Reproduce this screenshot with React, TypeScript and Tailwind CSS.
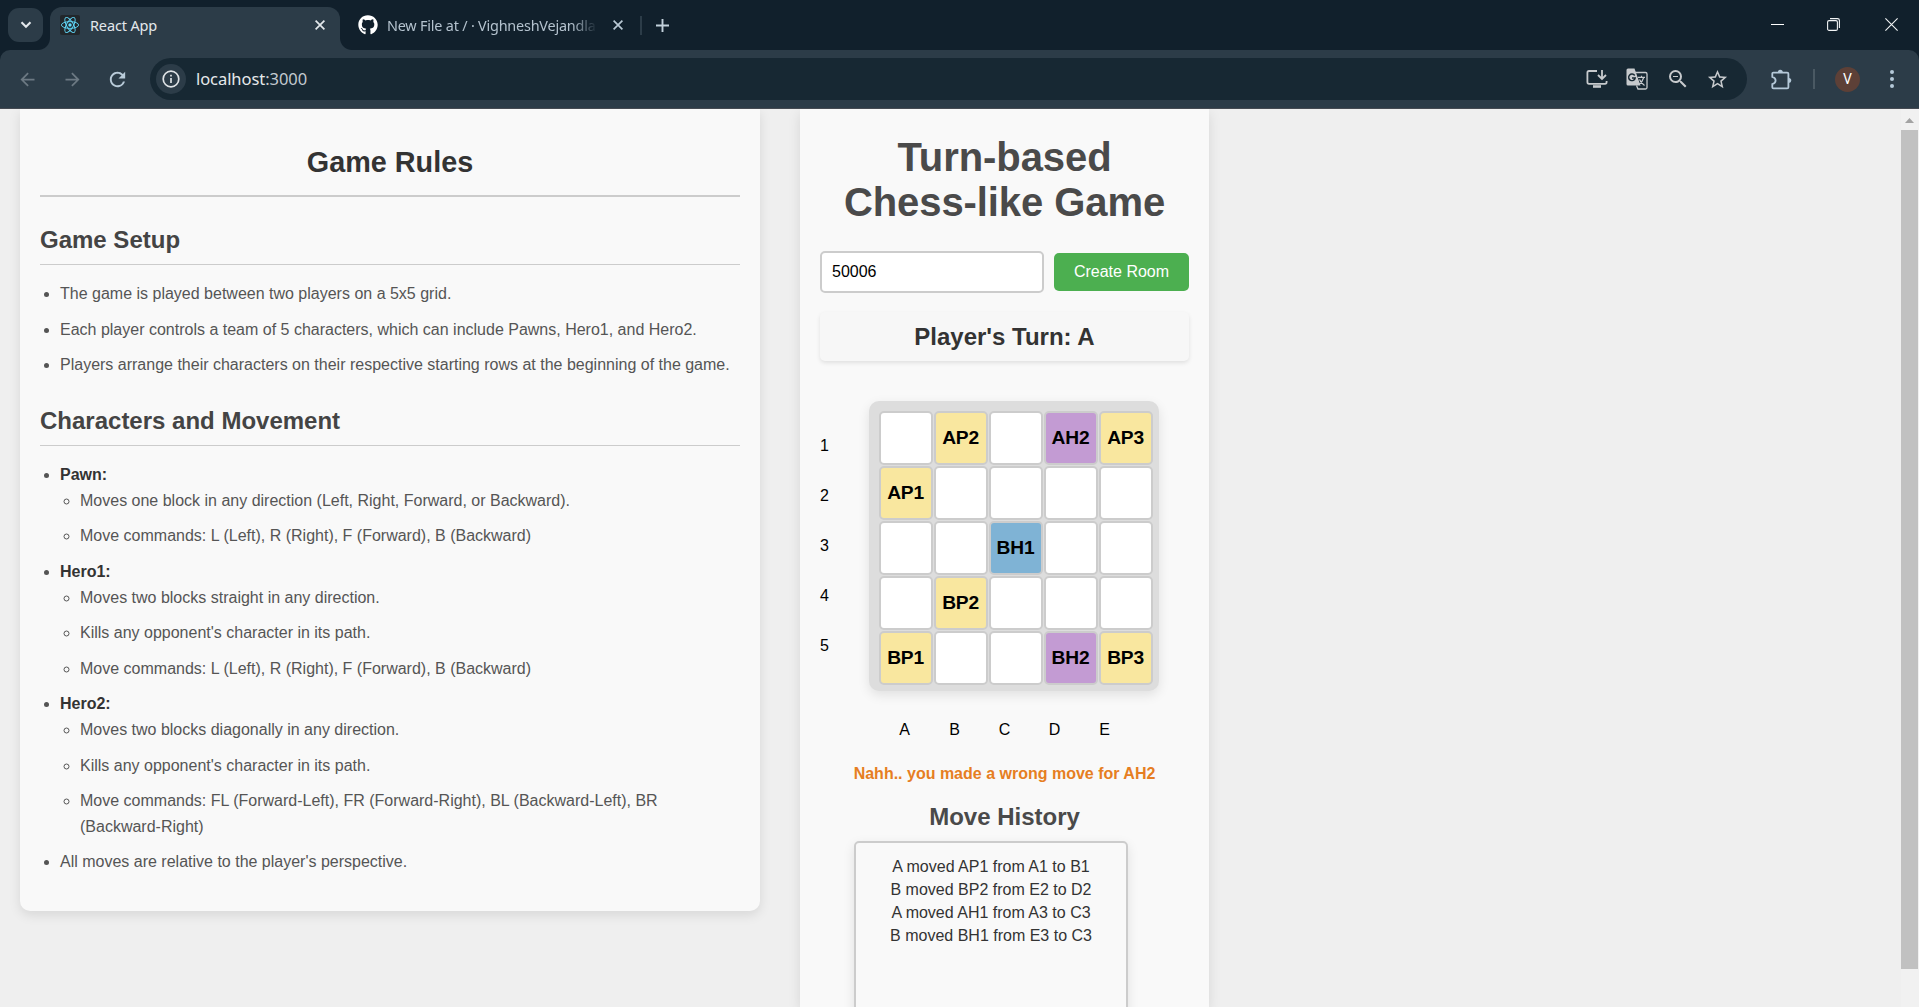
import React from "react";
import { MdArrowBack, MdArrowForward, MdRefresh, MdStarBorder, MdOutlineZoomOut } from "react-icons/md";
import { FaGithub } from "react-icons/fa";

type IconProps = { className?: string };

function ReactLogo({ className }: IconProps) {
  return (
    <svg viewBox="0 0 20 20" className={className} fill="none" stroke="#61dafb" strokeWidth="0.9">
      <rect width="20" height="20" rx="2" fill="#22272b" stroke="none" />
      <ellipse cx="10" cy="10" rx="8.6" ry="3.4" />
      <ellipse cx="10" cy="10" rx="8.6" ry="3.4" transform="rotate(60 10 10)" />
      <ellipse cx="10" cy="10" rx="8.6" ry="3.4" transform="rotate(120 10 10)" />
      <circle cx="10" cy="10" r="1.7" fill="#61dafb" stroke="none" />
    </svg>
  );
}

function CloseIcon({ className }: IconProps) {
  return (
    <svg viewBox="0 0 10 10" className={className} stroke="currentColor" strokeWidth="1.7" fill="none">
      <path d="M0.6 0.6 9.4 9.4M9.4 0.6 0.6 9.4" />
    </svg>
  );
}

function InstallIcon({ className }: IconProps) {
  return (
    <svg viewBox="0 0 22 20" className={className} stroke="currentColor" strokeWidth="1.8" fill="none">
      <path d="M11 2H3Q1.400 2 1.400 3.600V13Q1.400 14.800 3 14.800H19Q20.600 14.800 20.600 13V12" />
      <path d="M16 1V9.500M12 6 16 10 20 6" />
      <path d="M7 17.500H15" strokeWidth="2.600" />
    </svg>
  );
}

function TranslateIcon({ className }: IconProps) {
  return (
    <svg viewBox="0 0 22 22" className={className} fill="none">
      <path d="M2 0.500H8.500L14.500 17.500H2Q0.500 17.500 0.500 16V2Q0.500 0.500 2 0.500Z" fill="#c7cacd" />
      <path d="M9 4.500H19.500Q21 4.500 21 6V19.500Q21 21 19.500 21H12L10.500 17.500" stroke="#c7cacd" strokeWidth="1.3" />
      <path d="M8.700 7.500A3.300 3.300 0 1 0 9.200 10H6" stroke="#172833" strokeWidth="1.4" />
      <path
        d="M12 9.300H19M15.500 7.800V9.300M17.700 9.500Q16.500 14 12.800 16.600M13.500 11.500Q15 15 18.500 17.500"
        stroke="#c7cacd"
        strokeWidth="1.2"
      />
    </svg>
  );
}

function ExtensionIcon({ className }: IconProps) {
  return (
    <svg viewBox="0 0 21 21" className={className}>
      <path
        d="M2.300 3.600H16.200Q17.400 3.600 17.400 4.800V18.200Q17.400 19.400 16.200 19.400H2.500Q1.300 19.400 1.300 18.200V15.200Q4.600 14.200 4.600 11.500Q4.600 8.800 1.300 7.800V4.600Q1.300 3.600 2.300 3.600Z"
        fill="none"
        stroke="currentColor"
        strokeWidth="1.800"
      />
      <path d="M6.800 3.200A2.500 2.500 0 0 1 11.800 3.200ZM17.800 9A2.500 2.500 0 0 1 17.800 14Z" fill="currentColor" />
    </svg>
  );
}

function BrowserTabs() {
  return (
    <div className="flex h-[50px] bg-[#11202c]">
      <div className="mt-2 ml-2 flex h-[34px] w-[35px] items-center justify-center rounded-[11px] bg-[#2c3c48]">
        <svg viewBox="0 0 12 8" className="h-[8px] w-[12px]" fill="none" stroke="#e3e8ec" strokeWidth="2.1">
          <path d="M1.500 1.300 6 5.800 10.500 1.300" />
        </svg>
      </div>
      <div className="relative ml-[7px] flex h-[43px] w-[290px] items-center self-end rounded-t-[12px] bg-[#2c3c48] pb-[7px] pl-[10px]">
        <span className="absolute bottom-0 -left-3 h-3 w-3 bg-[radial-gradient(circle_at_0_0,transparent_11.5px,#2c3c48_12.5px)]" />
        <span className="absolute -right-3 bottom-0 h-3 w-3 bg-[radial-gradient(circle_at_100%_0,transparent_11.5px,#2c3c48_12.5px)]" />
        <ReactLogo className="h-5 w-5" />
        <span className="ml-[10px] pt-px text-[14.5px] tracking-[-0.15px] text-[#e3e8ec]">React App</span>
        <CloseIcon className="mr-[15px] ml-auto h-[10px] w-[10px] text-[#e3e8ec]" />
      </div>
      <div className="flex h-[50px] items-center pl-[18px]">
        <FaGithub className="h-5 w-5 text-white" />
        <span className="ml-[9px] w-[209px] overflow-hidden pt-px text-[14.4px] tracking-[-0.2px] whitespace-nowrap text-[#b4c2ce] [mask-image:linear-gradient(to_right,black_185px,transparent_210px)]">
          New File at / · VighneshVejandla
        </span>
        <CloseIcon className="ml-[17px] h-[10px] w-[10px] text-[#b9c8d4]" />
        <span className="ml-[17px] h-[19px] w-[2px] bg-[#2c3c48]" />
        <svg viewBox="0 0 13 13" className="ml-[14px] h-[13px] w-[13px]" stroke="#c3d1dc" strokeWidth="1.9">
          <path d="M6.500 0V13M0 6.500H13" />
        </svg>
      </div>
      <div className="ml-auto flex h-[49px] items-center pr-[21px]">
        <span className="h-[1px] w-[13px] bg-white" />
        <svg viewBox="0 0 13 13" className="ml-[43px] h-[13px] w-[13px]" fill="none" stroke="#f2f4f5" strokeWidth="1.1">
          <rect x="0.600" y="2.600" width="9.800" height="9.800" rx="1.500" />
          <path d="M3 0.600H10.500Q12.400 0.600 12.400 2.500V10" />
        </svg>
        <svg viewBox="0 0 13 13" className="ml-[45px] h-[13px] w-[13px]" stroke="#f2f4f5" strokeWidth="1.100">
          <path d="M0.400 0.400 12.600 12.600M12.600 0.400 0.400 12.600" />
        </svg>
      </div>
    </div>
  );
}

function Toolbar() {
  return (
    <div className="bg-[#11202c]">
      <div className="flex h-[59px] items-center rounded-t-[10px] border-b border-[#454a52] bg-[#2c3c48] pl-[17px]">
        <MdArrowBack className="h-[21px] w-[21px] text-[#6c7983]" />
        <MdArrowForward className="ml-6 h-[21px] w-[21px] text-[#6c7983]" />
        <MdRefresh className="ml-[23px] h-[23px] w-[23px] text-[#b9cbd9]" />
        <div className="ml-[21px] flex h-[42px] w-[1597px] items-center rounded-full bg-[#172833] pl-[6px]">
          <span className="flex h-[30px] w-[30px] items-center justify-center rounded-full bg-[#2c3c48]">
            <svg viewBox="0 0 18 18" className="h-[18px] w-[18px]" fill="none" stroke="#dfe3e6" strokeWidth="1.700">
              <circle cx="9" cy="9" r="7.800" />
              <path d="M9 8V13M9 4.800V6.600" />
            </svg>
          </span>
          <span className="ml-[10px] pt-px text-[16.5px] tracking-[-0.06px] text-[#e6e9eb]">
            localhost<span className="text-[#c3cad0]">:3000</span>
          </span>
          <div className="ml-auto flex items-center pr-[18px] text-[#c7cacd]">
            <InstallIcon className="h-5 w-[22px]" />
            <TranslateIcon className="ml-[18px] h-[22px] w-[22px]" />
            <MdOutlineZoomOut className="ml-[18px] h-[24px] w-[24px]" />
            <MdStarBorder className="ml-[16px] h-[23px] w-[23px]" />
          </div>
        </div>
        <ExtensionIcon className="ml-6 h-[21px] w-[21px] text-[#b5c9d9]" />
        <span className="ml-[21px] h-5 w-[2px] bg-[#4a5963]" />
        <span className="ml-5 flex h-[25px] w-[25px] items-center justify-center rounded-full bg-[#5d4037] font-['Roboto',sans-serif] text-[14px] text-white">
          V
        </span>
        <svg viewBox="0 0 4 18" className="ml-[30px] h-[18px] w-1" fill="#b5c9d9">
          <circle cx="2" cy="2" r="2" />
          <circle cx="2" cy="9" r="2" />
          <circle cx="2" cy="16" r="2" />
        </svg>
      </div>
    </div>
  );
}

const setup = [
  "The game is played between two players on a 5x5 grid.",
  "Each player controls a team of 5 characters, which can include Pawns, Hero1, and Hero2.",
  "Players arrange their characters on their respective starting rows at the beginning of the game.",
];

const characters = [
  {
    name: "Pawn:",
    rules: [
      "Moves one block in any direction (Left, Right, Forward, or Backward).",
      "Move commands: L (Left), R (Right), F (Forward), B (Backward)",
    ],
  },
  {
    name: "Hero1:",
    rules: [
      "Moves two blocks straight in any direction.",
      "Kills any opponent's character in its path.",
      "Move commands: L (Left), R (Right), F (Forward), B (Backward)",
    ],
  },
  {
    name: "Hero2:",
    rules: [
      "Moves two blocks diagonally in any direction.",
      "Kills any opponent's character in its path.",
      "Move commands: FL (Forward-Left), FR (Forward-Right), BL (Backward-Left), BR (Backward-Right)",
    ],
  },
];

function SectionTitle({ children }: { children: React.ReactNode }) {
  return (
    <h3 className="mt-6 mb-[15.8px] border-b border-[#ccc] pb-[5px] text-[24px] leading-[38.4px] font-bold text-[#444]">
      {children}
    </h3>
  );
}

function Rules() {
  return (
    <section className="w-[740px] self-start rounded-b-[10px] bg-[#f9f9f9] px-5 pt-[30px] pb-[36px] text-[16px] leading-[25.6px] text-[#555] shadow-[0_4px_12px_rgba(0,0,0,0.1)]">
      <h2 className="border-b-2 border-[#ccc] pb-[10px] text-center text-[28.8px] leading-[46.08px] font-bold text-[#333]">
        Game Rules
      </h2>
      <SectionTitle>Game Setup</SectionTitle>
      <ul className="flex list-disc flex-col gap-[10px] pl-5">
        {setup.map((line) => (
          <li key={line}>{line}</li>
        ))}
      </ul>
      <SectionTitle>Characters and Movement</SectionTitle>
      <ul className="flex list-disc flex-col gap-[10px] pl-5">
        {characters.map((c) => (
          <li key={c.name}>
            <strong className="text-[#333]">{c.name}</strong>
            <ul className="flex list-[circle] flex-col gap-[10px] pl-5">
              {c.rules.map((r) => (
                <li key={r}>{r}</li>
              ))}
            </ul>
          </li>
        ))}
        <li>All moves are relative to the player's perspective.</li>
      </ul>
    </section>
  );
}

const board = [
  ["", "AP2", "", "AH2", "AP3"],
  ["AP1", "", "", "", ""],
  ["", "", "BH1", "", ""],
  ["", "BP2", "", "", ""],
  ["BP1", "", "", "BH2", "BP3"],
];

function cellColor(piece: string) {
  if (piece.slice(1, 2) === "P") return "bg-[#f9e79f]";
  if (piece.slice(1) === "H1") return "bg-[#7fb3d5]";
  if (piece.slice(1) === "H2") return "bg-[#c39bd3]";
  return "bg-white";
}

const moves = [
  "A moved AP1 from A1 to B1",
  "B moved BP2 from E2 to D2",
  "A moved AH1 from A3 to C3",
  "B moved BH1 from E3 to C3",
];

function Game() {
  return (
    <section className="ml-10 w-[409px] bg-[#f9f9f9] px-5 pt-[26px] shadow-[0_4px_12px_rgba(0,0,0,0.1)]">
      <h1 className="text-center text-[40px] leading-[45px] font-bold tracking-[-0.08px] text-[#4a4a4a]">
        Turn-based
        <br />
        Chess-like Game
      </h1>
      <div className="mt-[26px] flex items-center gap-[10px]">
        <input
          defaultValue="50006"
          className="h-[42px] w-[224px] rounded-[5px] border-2 border-[#ccc] bg-white px-[10px] text-[16px] text-black"
        />
        <button className="h-[38px] w-[135px] rounded-[5px] bg-[#4caf50] text-[16px] text-white">Create Room</button>
      </div>
      <div className="mt-[19px] flex h-[49px] items-center justify-center rounded-[5px] bg-[#f7f7f7] text-[24px] font-bold text-[#333] shadow-[0_2px_4px_rgba(0,0,0,0.1)]">
        Player's Turn: A
      </div>
      <div className="mt-10 flex">
        <div className="flex w-[49px] flex-col pt-5 text-[16px] text-black">
          {["1", "2", "3", "4", "5"].map((n) => (
            <span key={n} className="flex h-[50px] items-center">
              {n}
            </span>
          ))}
        </div>
        <div className="grid h-[290px] w-[290px] grid-cols-[repeat(5,54px)] grid-rows-[repeat(5,54px)] gap-px rounded-[10px] bg-[#ddd] pt-[10px] pl-[10px] shadow-[0_4px_12px_rgba(0,0,0,0.1)]">
          {board.flat().map((piece, i) => (
            <div
              key={i}
              className={`flex items-center justify-center rounded-[5px] border-2 border-[#ccc] pr-px text-[19.2px] font-bold tracking-[-0.2px] text-black ${cellColor(piece)}`}
            >
              {piece}
            </div>
          ))}
        </div>
      </div>
      <div className="mt-[30px] flex pl-[59.5px] text-[16px] leading-[18px] text-black">
        {["A", "B", "C", "D", "E"].map((l) => (
          <span key={l} className="w-[50px] text-center">
            {l}
          </span>
        ))}
      </div>
      <p className="mt-[26px] text-center text-[16px] leading-[18px] font-bold text-[#e67e22]">
        Nahh.. you made a wrong move for AH2
      </p>
      <h2 className="mt-[20px] text-center text-[24px] leading-[27px] font-bold text-[#4a4a4a]">Move History</h2>
      <div className="mt-[11px] ml-[34px] h-[300px] w-[274px] rounded-[5px] border-2 border-[#ccc] pt-[12px] text-center text-[16px] leading-[23px] text-[#333] shadow-[0_4px_12px_rgba(0,0,0,0.1)]">
        {moves.map((m) => (
          <div key={m}>{m}</div>
        ))}
      </div>
    </section>
  );
}

export default function App() {
  return (
    <div className="flex h-[1007px] w-[1919px] flex-col overflow-hidden">
      <header className="relative z-10 font-['Noto_Sans',sans-serif]">
        <BrowserTabs />
        <Toolbar />
      </header>
      <main className="flex h-[898px] overflow-hidden bg-[#efefef] pl-5 font-['Liberation_Sans',Arial,sans-serif]">
        <Rules />
        <Game />
        <div className="ml-auto flex w-[18px] flex-col items-start bg-[#f1f1f1]">
          <svg viewBox="0 0 9 5" className="mt-[9px] ml-1 h-[5px] w-[9px]" fill="#a3a3a3">
            <path d="M0 5 4.500 0 9 5Z" />
          </svg>
          <div className="mt-[7px] h-[839px] w-[17px] bg-[#c1c1c1]" />
        </div>
      </main>
    </div>
  );
}
